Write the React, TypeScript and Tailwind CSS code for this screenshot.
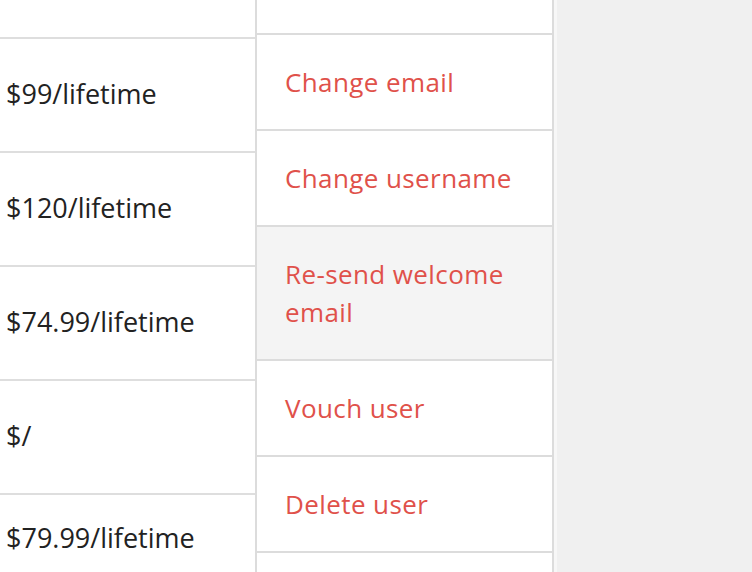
const prices = ['$99/lifetime', '$120/lifetime', '$74.99/lifetime', '$/', '$79.99/lifetime'];

const actions = [
  { label: 'Change email' },
  { label: 'Change username' },
  { label: 'Re-send welcome email', active: true },
  { label: 'Vouch user' },
  { label: 'Delete user' },
];

export default function App() {
  return (
    <div className="flex h-[572px] w-[752px] overflow-hidden bg-[#f0f0f0]">
      <div className="w-[255px] shrink-0 bg-white font-['Open_Sans',sans-serif] text-[27px] leading-[38px] text-[#222]">
        <div className="h-[39px] border-b-2 border-[#dedede]" />
        {prices.map((p, i) => (
          <div
            key={p}
            className={`h-[114px] border-b-2 border-[#dedede] pl-[6px] ${
              i === prices.length - 1 ? 'pt-[24px]' : 'pt-[36px]'
            }`}
          >
            {p}
          </div>
        ))}
      </div>
      <div className="w-[299px] shrink-0 border-x-2 border-[#dcdcdc] bg-white font-['Open_Sans',sans-serif] text-[26px] leading-[38px] text-[#e0514a]">
        <div className="h-[35px] border-b-2 border-[#dcdcdc]" />
        {actions.map((a) => (
          <div
            key={a.label}
            className={`border-b-2 border-[#dcdcdc] py-[28px] pl-[28px] pr-[16px] tracking-[0.4px] ${
              a.active ? 'bg-[#f4f4f4]' : ''
            }`}
          >
            {a.label}
          </div>
        ))}
      </div>
      <div className="w-[3px] shrink-0 bg-[#f7f7f7]" />
    </div>
  );
}
